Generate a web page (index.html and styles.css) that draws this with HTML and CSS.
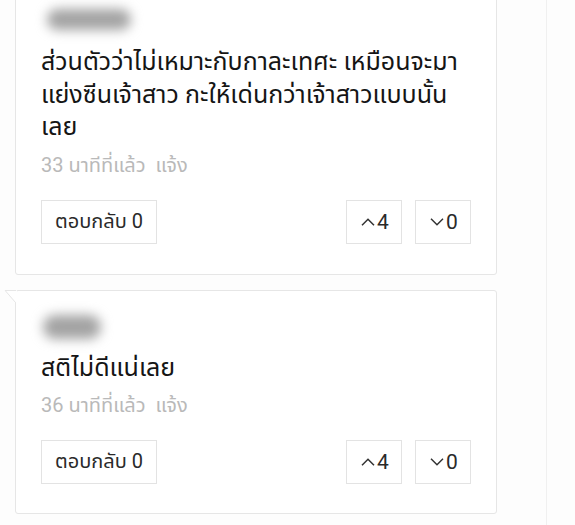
FILE: index.html
```html
<!DOCTYPE html>
<html lang="th">
<head>
<meta charset="utf-8">
<link rel="stylesheet" href="styles.css">
</head>
<body>
<div class="page">
  <div class="thread">
    <article class="card card-first">
      <div class="author author-wide"><span class="blob blob-wide"></span></div>
      <p class="text">ส่วนตัวว่าไม่เหมาะกับกาละเทศะ เหมือนจะมา<br>แย่งซีนเจ้าสาว กะให้เด่นกว่าเจ้าสาวแบบนั้น<br>เลย</p>
      <div class="meta">33 นาทีที่แล้ว&nbsp; แจ้ง</div>
      <div class="actions">
        <button class="btn btn-reply">ตอบกลับ 0</button>
        <div class="votes">
          <button class="btn btn-vote"><svg class="chev" viewBox="0 0 14 8" width="14" height="8"><path d="M1 7.3 L7 1.3 L13 7.3"/></svg>4</button>
          <button class="btn btn-vote"><svg class="chev" viewBox="0 0 14 8" width="14" height="8"><path d="M1 0.7 L7 6.7 L13 0.7"/></svg>0</button>
        </div>
      </div>
    </article>
    <article class="card card-reply">
      <svg class="tail" viewBox="0 0 12 14" width="12" height="14"><path class="tail-fill" d="M0 0.5 L12 0.5 L12 14 Z"/><path class="tail-line" d="M0 0.5 L11 0.5 M0.3 0.7 L10.5 12.5 L10.5 14"/></svg>
      <div class="author author-narrow"><span class="blob blob-narrow"></span></div>
      <p class="text">สติไม่ดีแน่เลย</p>
      <div class="meta">36 นาทีที่แล้ว&nbsp; แจ้ง</div>
      <div class="actions">
        <button class="btn btn-reply">ตอบกลับ 0</button>
        <div class="votes">
          <button class="btn btn-vote"><svg class="chev" viewBox="0 0 14 8" width="14" height="8"><path d="M1 7.3 L7 1.3 L13 7.3"/></svg>4</button>
          <button class="btn btn-vote"><svg class="chev" viewBox="0 0 14 8" width="14" height="8"><path d="M1 0.7 L7 6.7 L13 0.7"/></svg>0</button>
        </div>
      </div>
    </article>
  </div>
</div>
</body>
</html>
```

FILE: styles.css
```css
* { box-sizing: border-box; }
html, body { margin: 0; padding: 0; background: #fdfdfd; }
body {
  font-family: Roboto, "Noto Sans Thai", "Noto Sans", "DejaVu Sans", sans-serif;
  color: #222;
  overflow: hidden;
  height: 525px;
}
.page {
  width: 547px;
  height: 525px;
  border-right: 1px solid #f0f0f0;
  background: #fdfdfd;
}
.thread {
  display: flex;
  flex-direction: column;
  gap: 15px;
  padding-left: 15px;
  width: 497px;
}
.card {
  position: relative;
  background: #fff;
  border: 1px solid #e6e6e6;
  border-radius: 3px;
  padding: 15px 25px 30px 25px;
}
.card-first { margin-top: -16px; }
.card-reply { padding-bottom: 29px; }
.tail {
  position: absolute;
  left: -11px;
  top: -1px;
  overflow: visible;
}
.tail-fill { fill: #fff; }
.tail-line { fill: none; stroke: #e6e6e6; stroke-width: 1; }
.author {
  height: 40px;
  display: flex;
  align-items: center;
}
.blob {
  display: block;
  background: #a3a3a3;
  border-radius: 12px;
  filter: blur(6px);
}
.blob-wide { width: 84px; height: 21px; margin-left: 6px; margin-top: -2px; }
.blob-narrow { width: 58px; height: 24px; margin-left: 2px; margin-top: 2px; }
.text {
  margin: 6px 0 0 0;
  font-size: 25px;
  line-height: 32.5px;
  color: #151515;
  white-space: nowrap;
}
.meta {
  margin-top: 4px;
  font-size: 20px;
  line-height: 34px;
  color: #b9b9b9;
}
.actions {
  margin-top: 18px;
  display: flex;
  justify-content: space-between;
  align-items: center;
}
.votes { display: flex; gap: 13px; }
.btn {
  font-family: inherit;
  font-size: 20px;
  color: #2a2a2a;
  background: #fff;
  border: 1px solid #e3e3e3;
  border-radius: 0;
  height: 44px;
  display: flex;
  align-items: center;
  justify-content: center;
  padding: 0;
}
.btn-reply { width: 116px; }
.btn-vote { width: 56px; gap: 2px; font-size: 21px; padding-left: 2px; }
.chev { fill: none; stroke: #333; stroke-width: 1.5; }
```
